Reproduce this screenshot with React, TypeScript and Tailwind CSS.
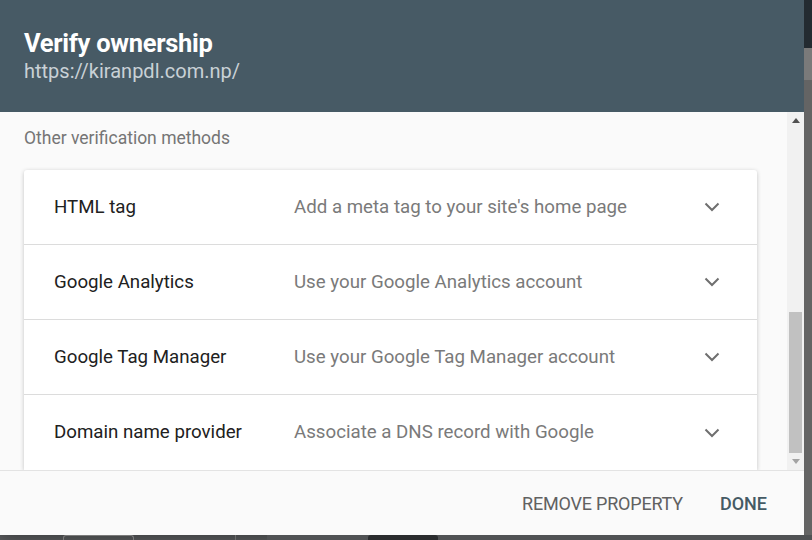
import React from 'react';

const methods = [
  { name: 'HTML tag', desc: "Add a meta tag to your site's home page" },
  { name: 'Google Analytics', desc: 'Use your Google Analytics account' },
  { name: 'Google Tag Manager', desc: 'Use your Google Tag Manager account' },
  { name: 'Domain name provider', desc: 'Associate a DNS record with Google' },
];

const Chevron = () => (
  <svg width="16" height="10" viewBox="0 0 16 10" fill="none">
    <path d="M1.5 1.5L8 8L14.5 1.5" stroke="#6f6f6f" strokeWidth="2" />
  </svg>
);

export default function App() {
  return (
    <div
      className="w-[812px] h-[540px] bg-[#5b5d5f] flex flex-col overflow-hidden"
      style={{ fontFamily: 'Roboto, "Noto Sans", sans-serif' }}
    >
      <div className="flex h-[535px]">
        {/* Dialog */}
        <div className="w-[804px] h-full flex flex-col bg-[#fafafa] shadow-[0_4px_16px_rgba(0,0,0,0.35)]">
          {/* Header */}
          <div className="h-[112px] shrink-0 bg-[#475a65] px-6 pt-[27px]">
            <h1 className="text-[25.5px] leading-8 font-bold text-white tracking-[-0.3px]">Verify ownership</h1>
            <p className="text-[20px] leading-6 text-[#c9d1d6]">https://kiranpdl.com.np/</p>
          </div>

          {/* Content */}
          <div className="flex-1 flex min-h-0">
            <div className="flex-1 overflow-hidden pl-6 pr-[30px] pt-[14px]">
              <p className="text-[17.5px] leading-6 text-[#757575]">Other verification methods</p>
              <div className="mt-5 bg-white rounded-t-[3px] shadow-[0_1px_4px_rgba(0,0,0,0.22)]">
                {methods.map((m, i) => (
                  <div
                    key={m.name}
                    className={`h-[75px] flex items-center pl-[30px] pr-[33px] ${
                      i < methods.length - 1 ? 'border-b border-[#dcdcdc]' : ''
                    }`}
                  >
                    <span className="w-[240px] text-[18.7px] text-[#212121]">{m.name}</span>
                    <span className="flex-1 text-[18.7px] text-[#7a7a7a]">{m.desc}</span>
                    <span className="w-6 flex justify-center">
                      <Chevron />
                    </span>
                  </div>
                ))}
              </div>
            </div>

            {/* Scrollbar */}
            <div className="w-[17px] bg-[#f1f1f1] flex flex-col">
              <div className="h-[17px] flex items-center justify-center">
                <svg width="8" height="5" viewBox="0 0 8 5">
                  <path d="M0 5L4 0L8 5Z" fill="#505050" />
                </svg>
              </div>
              <div className="flex-1 flex flex-col justify-end">
                <div className="h-[141px] mx-[2px] bg-[#c1c1c1]" />
              </div>
              <div className="h-[17px] flex items-center justify-center">
                <svg width="8" height="5" viewBox="0 0 8 5">
                  <path d="M0 0L8 0L4 5Z" fill="#a3a3a3" />
                </svg>
              </div>
            </div>
          </div>

          {/* Footer */}
          <div className="h-[65px] shrink-0 border-t border-[#e3e3e3] flex items-center justify-end gap-[37px] pr-[37px] bg-[#fafafa]">
            <button className="text-[18px] text-[#616161] uppercase tracking-[-0.2px]">Remove property</button>
            <button className="text-[18px] font-medium text-[#455a64] uppercase">Done</button>
          </div>
        </div>

        {/* Page behind, right edge */}
        <div className="flex-1 flex flex-col">
          <div className="h-[48px] bg-[#232b31]" />
          <div className="h-[32px] bg-[#7a7a7a]" />
          <div className="flex-1 bg-[#646464]" />
        </div>
      </div>

      {/* Page behind, bottom edge */}
      <div className="flex-1 flex">
        <div className="w-[63px]" />
        <div className="w-[71px] border-t border-x border-[#7a7a7a] rounded-t-[3px]" />
        <div className="w-[101px]" />
        <div className="w-px bg-[#6b6b6b]" />
        <div className="w-[31px]" />
        <div className="flex-1 bg-[#505254] flex">
          <div className="w-[101px]" />
          <div className="w-[70px] bg-[#2a2c2e] rounded-t-[3px]" />
        </div>
      </div>
    </div>
  );
}
